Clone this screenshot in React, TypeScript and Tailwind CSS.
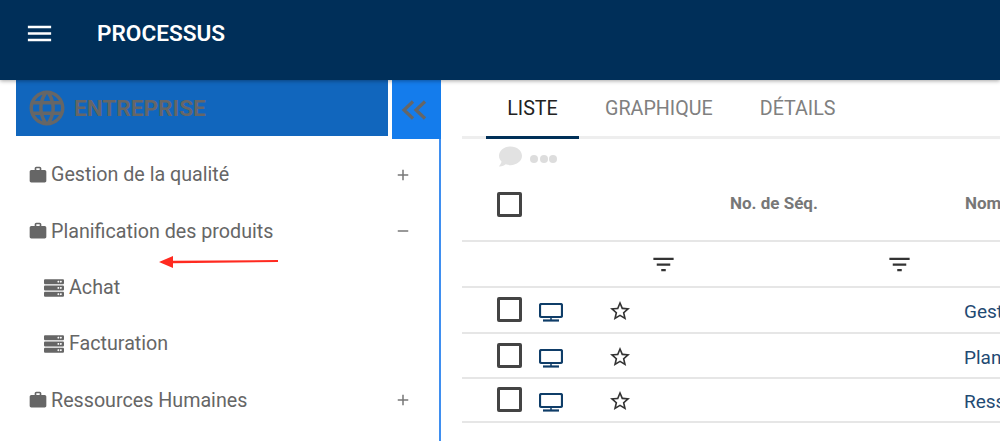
import React from "react";
import { MdMenu, MdWork, MdFilterList, MdStarBorder, MdAdd, MdRemove, MdLanguage } from "react-icons/md";
import { FaServer, FaComment } from "react-icons/fa";

const font = { fontFamily: "Roboto, sans-serif" };

function Cat({ label, open }: { label: string; open?: boolean }) {
  return (
    <div className="flex h-[56.3px] items-center pl-[28px] pr-[27px] text-[19.7px] text-[#666666]">
      <MdWork className="mr-[1px] size-[20px] shrink-0" />
      <span className="ml-[2px]">{label}</span>
      <span className="ml-auto">{open ? <MdRemove className="size-[18px] text-[#777777]" /> : <MdAdd className="size-[18px] text-[#777777]" />}</span>
    </div>
  );
}

function Sub({ label }: { label: string }) {
  return (
    <div className="flex h-[56.3px] items-center pl-[44px] text-[19.7px] text-[#666666]">
      <FaServer className="mr-[5px] size-[20px] shrink-0" />
      <span>{label}</span>
    </div>
  );
}

function Box({ className = "" }: { className?: string }) {
  return <div className={"size-[25px] shrink-0 rounded-[2px] border-[3px] border-[#444444] " + className} />;
}

function Monitor() {
  return (
    <svg className="shrink-0" width="24" height="19" viewBox="0 0 24 19" fill="none" stroke="#0f3d68">
      <rect x="1" y="1" width="22" height="13" rx="1.5" strokeWidth="2.2" />
      <path d="M12 14v3" strokeWidth="1.5" />
      <path d="M4 17.5h16" strokeWidth="2.2" />
    </svg>
  );
}

function Row({ name, h, top }: { name: string; h: string; top: string }) {
  return (
    <div className={"flex items-start border-b-2 border-[#e6e6e6] pl-[35px] " + h}>
      <Box className={top} />
      <div className={"ml-[17px] w-[24px] shrink-0 pt-[6px] " + top}><Monitor /></div>
      <MdStarBorder className={"ml-[44px] size-[26px] shrink-0 pt-[2px] text-[#333333] " + top} />
      <span className={"ml-[331px] whitespace-nowrap text-[19px] leading-[30px] text-[#1f4a73] " + top}>{name}</span>
    </div>
  );
}

export default function App() {
  return (
    <div style={font} className="h-[441px] w-[1000px] overflow-hidden bg-white">
      <header className="relative z-10 flex h-[80px] items-center bg-[#002f59] pb-[12px] pl-[24px] shadow-[0_1px_4px_rgba(0,0,0,0.35)]">
        <MdMenu className="mb-[2px] size-[31px] text-white" />
        <span className="ml-[42px] text-[22.6px] font-semibold text-white">PROCESSUS</span>
      </header>
      <div className="flex h-[361px]">
        <aside className="relative w-[441px] shrink-0 border-r-2 border-[#3f8ff0]">
          <div className="flex items-start">
            <div className="ml-[16px] flex h-[56px] w-[372px] items-center bg-[#1166bd] pl-[10px] text-[22.6px] font-bold text-[#666666]">
              <MdLanguage className="size-[42px] shrink-0" />
              <span className="ml-[6px] mt-[1px]">ENTREPRISE</span>
            </div>
            <div className="ml-[4px] mr-[-2px] flex h-[59px] w-[49px] items-center justify-center bg-[#147cec] pr-[5px]">
              <svg width="26" height="20" viewBox="0 0 26 20" fill="none" stroke="#666666" strokeWidth="3.2">
                <path d="M12 1.5 3 10l9 8.5" />
                <path d="M24 1.5 15 10l9 8.5" />
              </svg>
            </div>
          </div>
          <div className="pt-[8px]">
            <Cat label="Gestion de la qualité" />
            <Cat label="Planification des produits" open />
            <Sub label="Achat" />
            <Sub label="Facturation" />
            <Cat label="Ressources Humaines" />
          </div>
          <svg className="absolute left-[156px] top-[174px]" width="124" height="16" viewBox="0 0 124 16">
            <path d="M3 8 17 2v4.8l105-.8v2L17 9.2V14z" fill="#ff2a20" />
          </svg>
        </aside>
        <main className="min-w-0 flex-1 pl-[21px]">
          <div className="flex h-[59px] border-b-[3px] border-[#eeeeee] pl-[24px] pt-[1px] text-[19.7px]">
            <div className="mb-[-3px] flex w-[93px] items-center justify-center border-b-[3px] border-[#003058] text-[#222222]">LISTE</div>
            <div className="ml-[26px] flex items-center text-[#808080]">GRAPHIQUE</div>
            <div className="ml-[47px] flex items-center text-[#808080]">DÉTAILS</div>
          </div>
          <div className="flex h-[20px] items-start gap-[8px] pl-[37px] pt-[6px] text-[#e2e2e2]">
            <FaComment className="size-[23px] shrink-0" />
            <div className="mt-[10px] flex gap-[1.5px]">
              <span className="size-[8px] rounded-full bg-[#dddddd]" />
              <span className="size-[8px] rounded-full bg-[#dddddd]" />
              <span className="size-[8px] rounded-full bg-[#dddddd]" />
            </div>
          </div>
          <div className="flex h-[83px] items-center whitespace-nowrap border-b-2 border-[#e6e6e6] pl-[35px] pt-[9px]">
            <Box />
            <span className="ml-[208px] text-[17px] font-bold text-[#777777]">No. de Séq.</span>
            <span className="ml-[147px] text-[17px] font-bold text-[#777777]">Nom</span>
          </div>
          <div className="flex h-[46px] items-center border-b-2 border-[#e6e6e6] pl-[188px]">
            <MdFilterList className="size-[27px] text-[#333333]" />
            <MdFilterList className="ml-[209px] size-[27px] text-[#333333]" />
          </div>
          <Row name="Gestion de la qualité" h="h-[46px]" top="mt-[9px]" />
          <Row name="Planification des produits" h="h-[45px]" top="mt-[9px]" />
          <Row name="Ressources Humaines" h="h-[44px]" top="mt-[8px]" />
        </main>
      </div>
    </div>
  );
}
